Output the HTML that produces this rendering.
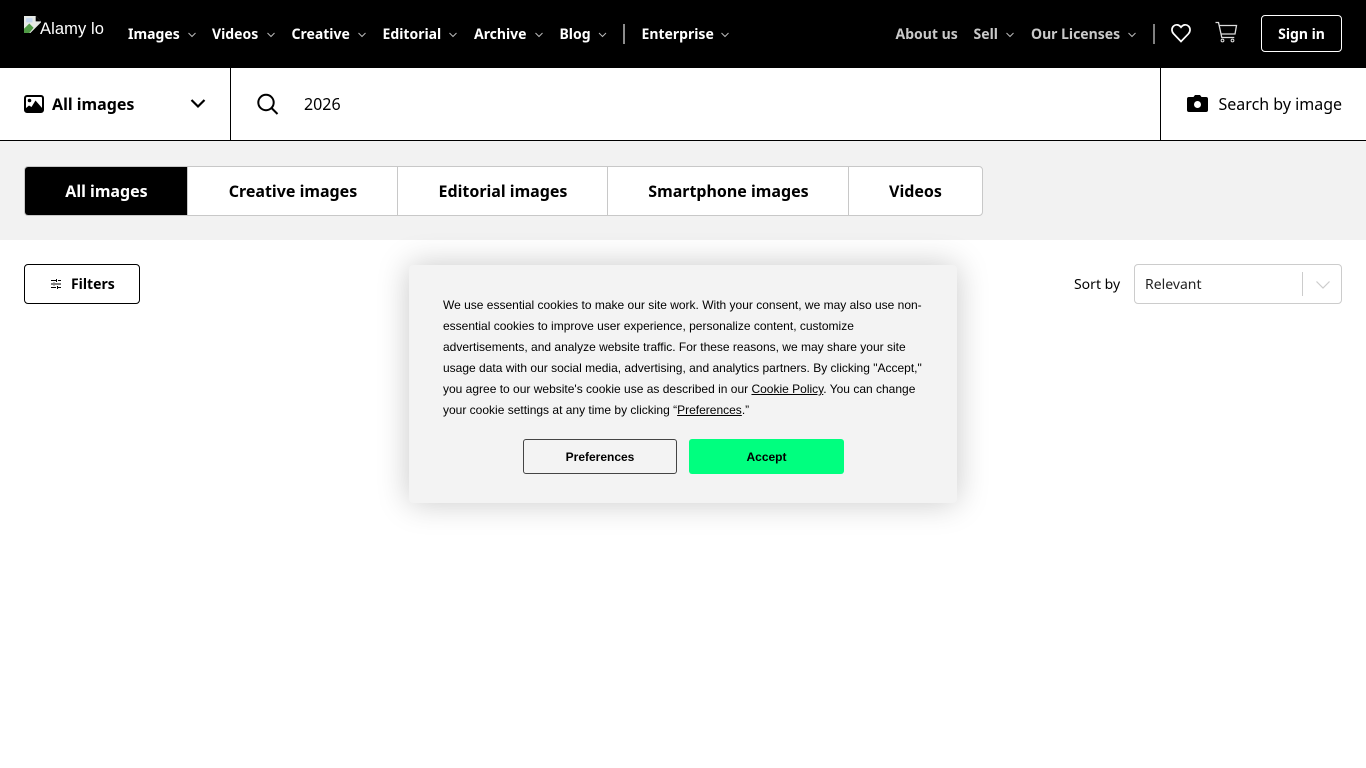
<!DOCTYPE html>
<html lang="en"><head><meta charset="utf-8"><title>2026 Stock Photos and Images - Alamy</title>
<style>
html,body{margin:0;padding:0;background:#fff}
body{width:1366px;height:768px;overflow:hidden;position:relative;font-family:"Noto Sans","DejaVu Sans","Liberation Sans",sans-serif;color:#000}
.a{position:absolute;white-space:nowrap}
.n{top:25px;font-size:14px;line-height:20px;font-weight:700;color:#fff}
.g{color:#c9c9c9}
.tab{position:absolute;top:167px;height:48px;line-height:48px;text-align:center;font-size:16px;font-weight:700;border-left:1px solid #c8c8c8;box-sizing:border-box}
svg{position:absolute;display:block}
.c{font-family:"Liberation Sans",Arial,sans-serif;font-size:12px;line-height:21px;color:#000;left:443px;top:295px}
.c u{text-underline-offset:1px}
</style></head><body>
<div class="a" style="left:0;top:0;width:1366px;height:68px;background:#000"></div>
<svg style="left:24px;top:16px" width="17" height="17" viewBox="0 0 16 16"><path d="M0 0H11L16 5V6L6 16H0Z" fill="#e6eae6"/><path d="M0 16V12L5 7 9 11 5 16Z" fill="#4f9a45"/><path d="M2 2H8V6H2Z" fill="#c4d6ee"/><path d="M11 0L16 5H11Z" fill="#000"/></svg>
<div class="a" style="left:40px;top:19px;font:16.500px/20px 'Liberation Sans',Arial,sans-serif;color:#fff;letter-spacing:.1px">Alamy lo</div>

<div class="a n" style="left:128px">Images</div>
<div class="a n" style="left:212px">Videos</div>
<div class="a n" style="left:291.500px">Creative</div>
<div class="a n" style="left:382.500px">Editorial</div>
<div class="a n" style="left:474px">Archive</div>
<div class="a n" style="left:559.500px">Blog</div>
<div class="a n" style="left:641.500px">Enterprise</div>
<div class="a n g" style="left:895.500px">About us</div>
<div class="a n g" style="left:973.500px">Sell</div>
<div class="a n g" style="left:1031px">Our Licenses</div>
<svg style="left:0;top:0" width="1366" height="68" fill="none" stroke="#b8b8b8" stroke-width="1">
<path d="M188.500 33l3.500 3.500 3.500-3.500M267.500 33l3.500 3.500 3.500-3.500M358.500 33l3.500 3.500 3.500-3.500M449.500 33l3.500 3.500 3.500-3.500M535.500 33l3.500 3.500 3.500-3.500M599 33l3.500 3.500 3.500-3.500M721.500 33l3.500 3.500 3.500-3.500M1006.500 33l3.500 3.500 3.500-3.500M1128.500 33l3.500 3.500 3.500-3.500"/>
<path d="M624 24V44" stroke="#bbb" stroke-width="1.500"/><path d="M1154 24V44" stroke="#aaa" stroke-width="1.500"/>
<path d="M1181 41.500l-7.300-7.600c-2.300-2.500-2.300-5.800-.2-7.800 2.200-2 5.500-1.700 7.500 1.100 2-2.800 5.300-3.100 7.500-1.100 2.100 2 2.100 5.300-.2 7.800z" stroke="#fff" stroke-width="1.700"/>
<path d="M1215.500 22.500h3l3.300 15h12.500M1219.500 25.500h17l-1.500 8.500h-14" stroke="#ddd" stroke-width="1.300"/>
<circle cx="1222.500" cy="40.500" r="1.400" stroke="#ddd"/><circle cx="1232.500" cy="40.500" r="1.400" stroke="#ddd"/>
</svg>
<div class="a" style="left:1261px;top:15px;width:81px;height:37px;box-sizing:border-box;border:1px solid #fff;border-radius:4px;color:#fff;font-size:14px;font-weight:700;line-height:37px;text-align:center">Sign in</div>

<div class="a" style="left:0;top:140px;width:1366px;height:1px;background:#000"></div>
<div class="a" style="left:230px;top:68px;width:1px;height:72px;background:#000"></div>
<div class="a" style="left:1160px;top:68px;width:1px;height:72px;background:#000"></div>
<svg style="left:24px;top:95px" width="20" height="18" viewBox="0 0 20 18"><rect x="1" y="1" width="18" height="16" rx="2" fill="#fff" stroke="#000" stroke-width="2"/><circle cx="5.500" cy="5.500" r="1.800"/><path d="M1.500 16.500V13.500L5 10.500 7.500 12 11.500 5.500 18.500 13.500V16.500Z"/></svg>
<div class="a" style="left:52px;top:93px;font-size:16px;line-height:22px;font-weight:700">All images</div>
<svg style="left:190px;top:98px" width="16" height="12" fill="none" stroke="#000" stroke-width="2.200"><path d="M1.500 2l6.500 6.500L14.500 2"/></svg>
<svg style="left:256px;top:93px" width="24" height="24" fill="none" stroke="#000" stroke-width="2"><circle cx="10" cy="9.500" r="7.700"/><path d="M15.500 15l6 6"/></svg>
<div class="a" style="left:304px;top:93px;font-size:16px;line-height:22px">2026</div>
<svg style="left:1187px;top:94px" width="21" height="19" viewBox="0 0 21 19"><path d="M2 3H6.500L8 1H13L14.500 3H19A2 2 0 0 1 21 5V16A2 2 0 0 1 19 18H2A2 2 0 0 1 0 16V5A2 2 0 0 1 2 3Z"/><circle cx="10.500" cy="10.500" r="3.500" fill="#fff"/></svg>
<div class="a" style="left:1218.500px;top:93px;font-size:16px;line-height:22px">Search by image</div>

<div class="a" style="left:0;top:141px;width:1366px;height:99px;background:#f2f2f2"></div>
<div class="a" style="left:24px;top:166px;width:959px;height:50px;box-sizing:border-box;background:#fff;border:1px solid #c8c8c8;border-radius:4px"></div>
<div class="tab" style="left:25px;width:163px;background:#000;color:#fff;border:0;border-radius:3px 0 0 3px">All images</div>
<div class="tab" style="left:187px;width:211px">Creative images</div>
<div class="tab" style="left:397px;width:211px">Editorial images</div>
<div class="tab" style="left:607px;width:242px">Smartphone images</div>
<div class="tab" style="left:848px;width:134px">Videos</div>

<div class="a" style="left:24px;top:264px;width:116px;height:40px;box-sizing:border-box;border:1px solid #000;border-radius:4px"></div>
<svg style="left:50px;top:278px" width="12" height="12" fill="none" stroke="#000" stroke-width="1"><path d="M1 2.500H6M8 2.500H11M1 6H3M5 6H11M1 9.500H6M8 9.500H11M6.500 1V4M4 4.500V7.500M7.500 8V11"/></svg>
<div class="a" style="left:71px;top:275px;font-size:14px;line-height:20px;font-weight:700">Filters</div>

<div class="a" style="left:1074px;top:275px;font-size:14px;line-height:20px">Sort by</div>
<div class="a" style="left:1134px;top:264px;width:208px;height:40px;box-sizing:border-box;border:1px solid #ccc;border-radius:4px"></div>
<div class="a" style="left:1145px;top:275px;font-size:14px;line-height:20px;color:#222">Relevant</div>
<div class="a" style="left:1302px;top:272px;width:1px;height:24px;background:#ccc"></div>
<svg style="left:1315px;top:280px" width="16" height="10" fill="none" stroke="#ccc" stroke-width="1.200"><path d="M1.500 1.500L8 8l6.500-6.500"/></svg>

<div class="a" style="left:409px;top:265px;width:548px;height:238px;background:#f3f3f3;border-radius:4px;box-shadow:0 0 32px rgba(0,0,0,.22)"></div>
<div class="a c">We use essential cookies to make our site work. With your consent, we may also use non-<br>essential cookies to improve user experience, personalize content, customize<br>advertisements, and analyze website traffic. For these reasons, we may share your site<br>usage data with our social media, advertising, and analytics partners. By clicking "Accept,"<br>you agree to our website's cookie use as described in our <u>Cookie Policy</u>. You can change<br>your cookie settings at any time by clicking “<u>Preferences</u>.”</div>
<div class="a" style="left:523px;top:439px;width:154px;height:35px;box-sizing:border-box;border:1px solid #444;border-radius:3px;font:700 12px/35px 'Liberation Sans',Arial,sans-serif;text-align:center">Preferences</div>
<div class="a" style="left:689px;top:439px;width:155px;height:35px;background:#00ff7f;border-radius:3px;font:700 12px/36px 'Liberation Sans',Arial,sans-serif;text-align:center">Accept</div>
</body></html>
